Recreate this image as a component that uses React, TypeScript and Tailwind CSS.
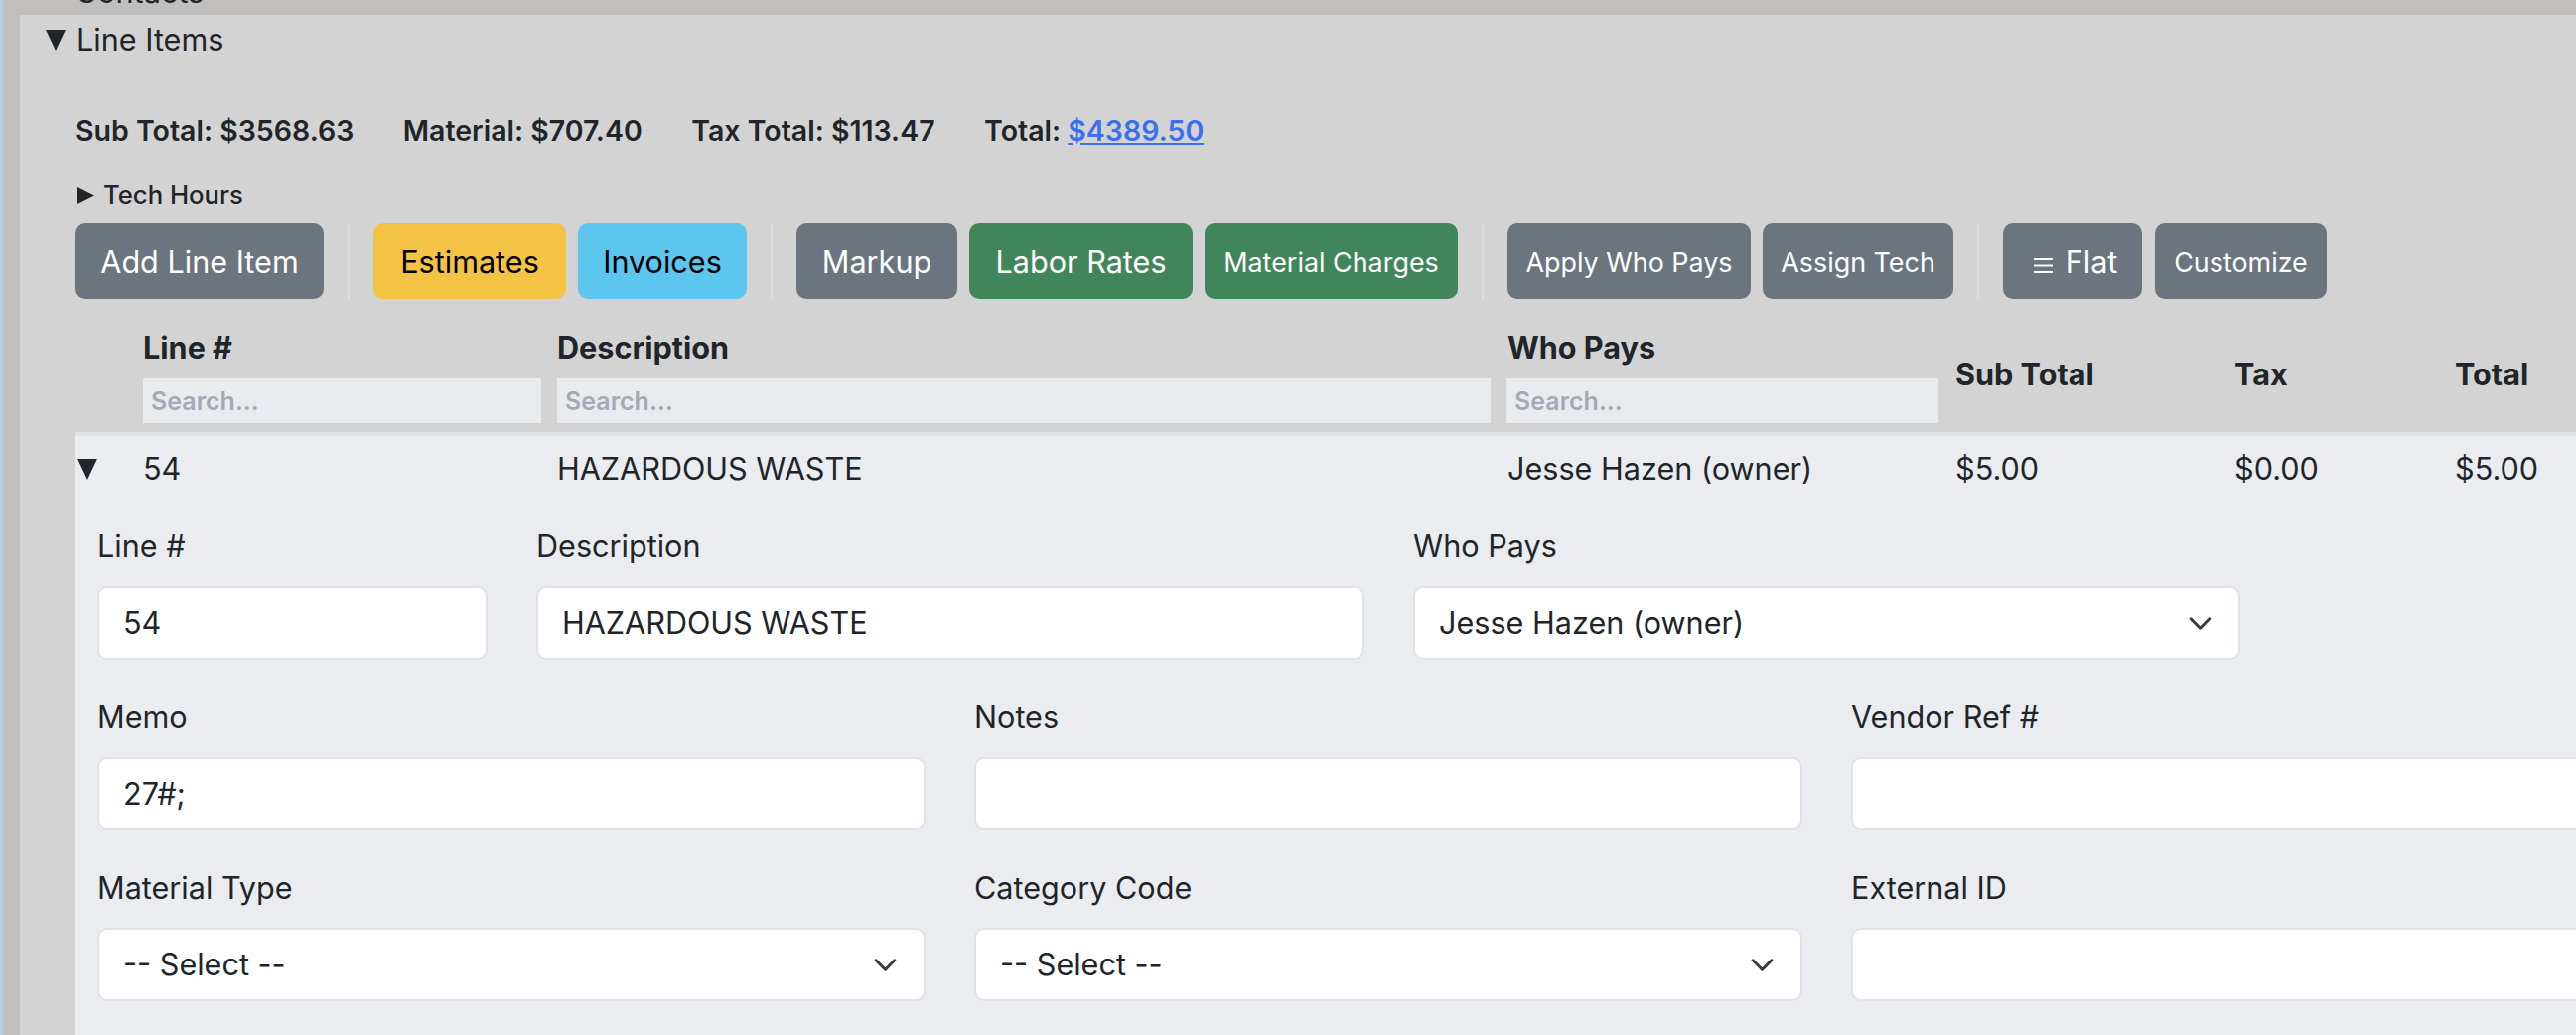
import { ReactNode } from "react";

const Caret = () => (
  <svg viewBox="0 0 16 16" className="absolute right-[28px] top-[25px] h-[25px] w-[25px]" fill="none">
    <path d="m2 5 6 6 6-6" stroke="#343a40" strokeWidth="1.9" strokeLinecap="round" strokeLinejoin="round" />
  </svg>
);

const Btn = ({ className, children }: { className: string; children: ReactNode }) => (
  <button className={`flex h-[76px] items-center justify-center rounded-[10px] pt-[2px] ${className}`}>{children}</button>
);

const Divider = () => <div className="mx-[24px] h-[76px] w-[2px] bg-[#dcdde0]" />;

const Field = ({ label, value, select }: { label: string; value?: string; select?: boolean }) => (
  <div>
    <label className="block h-[40px] text-[30.6px] leading-[40px]">{label}</label>
    <div className="relative mt-[20px]">
      <div className="h-[74px] rounded-[10px] border-2 border-[#dfe2e7] bg-white px-[24px] text-[30.6px] leading-[70px]">{value}</div>
      {select && <Caret />}
    </div>
  </div>
);

const Search = ({ width }: { width: string }) => (
  <input
    placeholder="Search..."
    className={`mt-[6px] block h-[45px] bg-[#e9ecef] px-[8px] text-[25px] font-semibold placeholder:text-[#a6a9b5] ${width}`}
  />
);

const cols = "grid grid-cols-[68px_417px_956px_452px_281px_222px_122px]";

export default function App() {
  return (
    <div className="h-[1042px] w-[2594px] overflow-hidden bg-[#b4d0dc] pl-[3px] font-['Inter',sans-serif] text-[#212529]">
      <div className="h-full border-l-[17px] border-[#c0bfbd] bg-[#c0bfbd]">
        <div className="h-[15px] overflow-hidden">
          <div className="-mt-[28px] ml-[27px] flex h-[40px] items-center text-[30.6px]">
            <span className="mr-[16px] text-[14px]">▶</span>Contacts
          </div>
        </div>
        <div className="h-[1027px] overflow-hidden bg-[#d3d3d3]">
          <div className="ml-[25px] flex h-[50px] items-center text-[30.6px]">
            <svg viewBox="0 0 20 20" className="mr-[10px] h-[22px] w-[22px]">
              <path d="M1 1h18L10 20z" fill="#212529" />
            </svg>
            Line Items
          </div>

          <div className="pl-[56px]">
            {/* Totals */}
            <div className="mt-[47px] flex h-[40px] items-center gap-x-[49.5px] text-[28.5px] font-semibold">
              <span>Sub Total: $3568.63</span>
              <span>Material: $707.40</span>
              <span>Tax Total: $113.47</span>
              <span>
                Total: <span className="text-[#3a6ff0] underline">$4389.50</span>
              </span>
            </div>

            <div className="mt-[29px] flex h-[30px] items-center text-[25.7px] font-medium">
              <svg viewBox="0 0 17 17" className="ml-[2px] mr-[9px] h-[17px] w-[17px]">
                <path d="M0 0l17 8.5L0 17z" fill="#212529" />
              </svg>
              Tech Hours
            </div>

            {/* Toolbar */}
            <div className="mt-[14px] flex text-[30.6px] text-white">
              <Btn className="w-[250px] bg-[#6c757d]">Add Line Item</Btn>
              <Divider />
              <Btn className="mr-[12px] w-[194px] bg-[#f5c343] text-black">Estimates</Btn>
              <Btn className="w-[170px] bg-[#5cc6ee] text-black">Invoices</Btn>
              <Divider />
              <Btn className="mr-[12px] w-[162px] bg-[#6c757d]">Markup</Btn>
              <Btn className="mr-[12px] w-[225px] bg-[#41865a]">Labor Rates</Btn>
              <Btn className="w-[255px] bg-[#41865a] text-[26.9px]">Material Charges</Btn>
              <Divider />
              <Btn className="mr-[12px] w-[245px] bg-[#6c757d] text-[26.9px]">Apply Who Pays</Btn>
              <Btn className="w-[192px] bg-[#6c757d] text-[26.9px]">Assign Tech</Btn>
              <Divider />
              <Btn className="mr-[13px] w-[140px] gap-[13px] bg-[#6c757d] pl-[6px]">
                <svg viewBox="0 0 19 15" className="mt-[6px] h-[15px] w-[19px]">
                  <path d="M0 1h19M0 7.5h19M0 14h19" stroke="#fff" strokeWidth="2" />
                </svg>
                <span>Flat</span>
              </Btn>
              <Btn className="w-[173px] bg-[#6c757d] text-[26.9px]">Customize</Btn>
            </div>

            {/* Table header */}
            <div className={`${cols} mt-[10px] h-[124px] text-[30.6px] font-bold`}>
              <div />
              <div className="pt-[12px]">
                <div className="h-[52px] leading-[54px]">Line #</div>
                <Search width="w-[401px]" />
              </div>
              <div className="pt-[12px]">
                <div className="h-[52px] leading-[54px]">Description</div>
                <Search width="w-[940px]" />
              </div>
              <div className="pt-[12px] pl-[1px]">
                <div className="h-[52px] leading-[54px]">Who Pays</div>
                <Search width="w-[435px] -ml-[1px]" />
              </div>
              <div className="pt-[40px] leading-[52px]">Sub Total</div>
              <div className="pt-[40px] leading-[52px]">Tax</div>
              <div className="pt-[40px] leading-[52px]">Total</div>
            </div>

            {/* Expanded row */}
            <div className="h-[700px] border-t-4 border-[#dfe1e5] bg-[#ebecf0]">
              <div className={`${cols} h-[66px] items-center text-[30.6px]`}>
                <svg viewBox="0 0 20 20" className="ml-[1px] mt-[-1px] h-[22px] w-[22px]">
                  <path d="M1 1h18L10 20z" fill="#212529" />
                </svg>
                <div>54</div>
                <div>HAZARDOUS WASTE</div>
                <div className="pl-[1px]">Jesse Hazen (owner)</div>
                <div>$5.00</div>
                <div>$0.00</div>
                <div>$5.00</div>
              </div>

              <div className="pl-[22px] pt-[25px]">
                <div className="grid grid-cols-[393px_834px_833px] gap-x-[49px]">
                  <Field label="Line #" value="54" />
                  <Field label="Description" value="HAZARDOUS WASTE" />
                  <Field label="Who Pays" value="Jesse Hazen (owner)" select />
                </div>
                <div className="mt-[38px] grid grid-cols-[834px_834px_834px] gap-x-[49px]">
                  <Field label="Memo" value="27#;" />
                  <Field label="Notes" />
                  <Field label="Vendor Ref #" />
                </div>
                <div className="mt-[38px] grid grid-cols-[834px_834px_834px] gap-x-[49px]">
                  <Field label="Material Type" value="-- Select --" select />
                  <Field label="Category Code" value="-- Select --" select />
                  <Field label="External ID" />
                </div>
              </div>
            </div>
          </div>
        </div>
      </div>
    </div>
  );
}
